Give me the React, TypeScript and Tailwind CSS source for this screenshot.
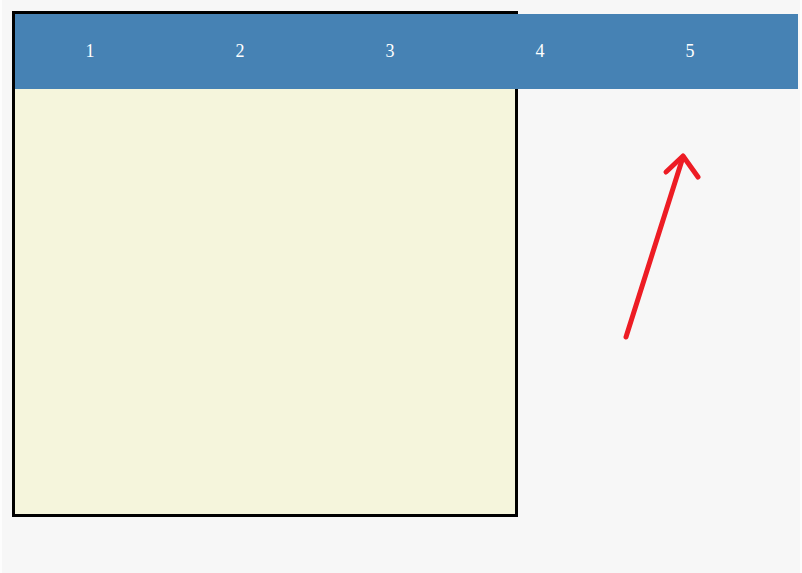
import React from 'react';

const tabs = ['1', '2', '3', '4', '5'];

function Arrow() {
  return (
    <svg
      className="absolute left-0 top-0 pointer-events-none"
      width={802}
      height={573}
      viewBox="0 0 802 573"
    >
      <g stroke="#ed1c24" strokeWidth={5} strokeLinecap="round" strokeLinejoin="round" fill="none">
        <path d="M624 337 L681 157" />
        <path d="M664 172 L681 156 L696 177" />
      </g>
    </svg>
  );
}

export default function App() {
  return (
    <div className="relative h-[573px] w-[802px] overflow-hidden bg-[#f7f7f7] border-x-2 border-[#fdfdfd] pl-[10px] pt-[11px]">
      <div className="w-[506px] h-[506px] border-[3px] border-black bg-[#f5f5dc]">
        <div className="flex w-[783px] h-[75px] bg-[#4682b4]">
          {tabs.map((t) => (
            <div
              key={t}
              className="w-[150px] flex items-center justify-center text-white text-[18px] font-['Liberation_Serif',serif]"
            >
              {t}
            </div>
          ))}
        </div>
      </div>
      <Arrow />
    </div>
  );
}
